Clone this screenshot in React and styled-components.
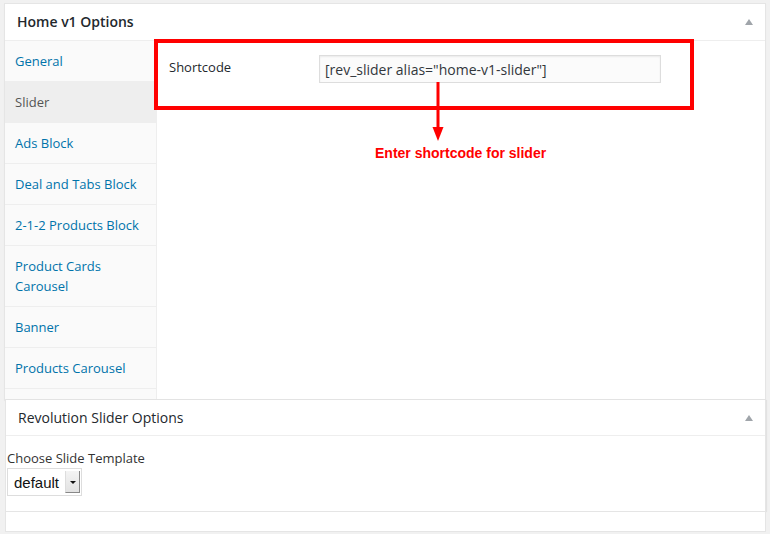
import React from 'react'
import styled, { createGlobalStyle } from 'styled-components'

const tabs = [
  { label: 'General' },
  { label: 'Slider', active: true },
  { label: 'Ads Block' },
  { label: 'Deal and Tabs Block' },
  { label: '2-1-2 Products Block' },
  { label: 'Product Cards Carousel' },
  { label: 'Banner' },
  { label: 'Products Carousel' },
]

const GlobalStyle = createGlobalStyle`
  html, body {
    margin: 0;
    padding: 0;
    background: #f1f1f1;
  }
  body {
    font-family: "Open Sans", "Liberation Sans", sans-serif;
    color: #444;
    min-height: 534px;
  }
`

function App() {
  return (
    <>
      <GlobalStyle />
      <Page>
        <Postbox>
          <PostboxHeader>
            <HeaderTitle $bold>Home v1 Options</HeaderTitle>
            <ToggleArrow />
          </PostboxHeader>
          <TabsLayout>
            <TabList>
              {tabs.map((tab) => (
                <TabItem key={tab.label} $active={tab.active}>
                  {tab.label === 'Product Cards Carousel' ? (
                    <>
                      Product Cards
                      <br />
                      Carousel
                    </>
                  ) : (
                    tab.label
                  )}
                </TabItem>
              ))}
            </TabList>
            <TabPanel>
              <FieldRow>
                <FieldLabel>Shortcode</FieldLabel>
                <TextInput readOnly value={'[rev_slider alias="home-v1-slider"]'} />
              </FieldRow>
              {/* annotation drawn over the screenshot */}
              <Callout />
              <CalloutArrow width="16" height="62" viewBox="0 0 16 62">
                <line x1="8" y1="0" x2="8" y2="47" stroke="#ff0000" strokeWidth="3" />
                <polygon points="2.5,45 13.5,45 8,59" fill="#ff0000" />
              </CalloutArrow>
              <CalloutNote>Enter shortcode for slider</CalloutNote>
            </TabPanel>
          </TabsLayout>
        </Postbox>

        <RevBox>
          <PostboxHeader $compact>
            <HeaderTitle>Revolution Slider Options</HeaderTitle>
            <ToggleArrow />
          </PostboxHeader>
          <RevBody>
            <RevLabel>Choose Slide Template</RevLabel>
            <SelectBox>
              <SelectValue>default</SelectValue>
              <SelectButton />
            </SelectBox>
          </RevBody>
        </RevBox>
        <BottomStrip />
      </Page>
    </>
  )
}

const Page = styled.div`
  padding: 3px 4px 0 4px;
`

const Postbox = styled.section`
  background: #fff;
  border: 1px solid #e5e5e5;
  box-shadow: 0 1px 1px rgba(0, 0, 0, 0.04);
`

const PostboxHeader = styled.header`
  display: flex;
  align-items: center;
  justify-content: space-between;
  height: ${(p) => (p.$compact ? '36px' : '37px')};
  padding: 0 12px;
  border-bottom: 1px solid #eee;
  box-sizing: border-box;
`

const HeaderTitle = styled.h2`
  margin: 0;
  font-size: 14px;
  line-height: 1.4;
  font-weight: ${(p) => (p.$bold ? 600 : 400)};
  color: #23282d;
`

const ToggleArrow = styled.span`
  width: 0;
  height: 0;
  border-left: 4px solid transparent;
  border-right: 4px solid transparent;
  border-bottom: 6px solid #a0a5aa;
`

const TabsLayout = styled.div`
  display: flex;
`

const TabList = styled.ul`
  list-style: none;
  margin: 0;
  padding: 0 0 10px 0;
  width: 151px;
  background: #fafafa;
  border-right: 1px solid #eee;
`

const TabItem = styled.li`
  padding: 10px;
  font-size: 13px;
  line-height: 20px;
  border-bottom: 1px solid #eee;
  color: ${(p) => (p.$active ? '#555' : '#0073aa')};
  background: ${(p) => (p.$active ? '#eee' : 'transparent')};
`

const TabPanel = styled.div`
  position: relative;
  flex: 1;
  padding: 14px 12px;
`

const FieldRow = styled.div`
  display: flex;
  align-items: center;
`

const FieldLabel = styled.label`
  width: 150px;
  font-size: 13px;
  color: #23282d;
  margin-top: -4px;
`

const TextInput = styled.input`
  width: 342px;
  height: 28px;
  box-sizing: border-box;
  padding: 0 5px;
  border: 1px solid #ddd;
  background: #fbfbfb;
  box-shadow: inset 0 1px 2px rgba(0, 0, 0, 0.07);
  font-family: "Open Sans", "Liberation Sans", sans-serif;
  font-size: 14px;
  color: #32373c;
  outline: none;
`

const Callout = styled.div`
  position: absolute;
  left: -3px;
  top: -2px;
  width: 540px;
  height: 71px;
  box-sizing: border-box;
  border: 4px solid #ff0000;
`

const CalloutArrow = styled.svg`
  position: absolute;
  left: 273px;
  top: 41px;
`

const CalloutNote = styled.div`
  position: absolute;
  left: 218px;
  top: 104px;
  font-family: "Liberation Sans", Arial, sans-serif;
  font-weight: 700;
  font-size: 14px;
  line-height: 16px;
  color: #ff0000;
  white-space: nowrap;
`

const RevBox = styled.section`
  margin-left: 1px;
  background: #fff;
  border: 1px solid #e5e5e5;
  border-top: 0;
  box-shadow: 1px 0 1px rgba(0, 0, 0, 0.06);
`

const RevBody = styled.div`
  height: 75px;
  box-sizing: border-box;
  padding: 12px 0 0 1px;
`

const RevLabel = styled.div`
  font-size: 13px;
  line-height: 20px;
  color: #333;
`

const SelectBox = styled.div`
  display: inline-flex;
  align-items: stretch;
  width: 75px;
  height: 28px;
  box-sizing: border-box;
  border: 1px solid #ddd;
  background: #fff;
  padding: 2px 1px 2px 0;
`

const SelectValue = styled.span`
  flex: 1;
  display: flex;
  align-items: center;
  padding-left: 6px;
  font-family: "Liberation Sans", Arial, sans-serif;
  font-size: 15px;
  color: #111;
`

const SelectButton = styled.span`
  position: relative;
  width: 13px;
  background: linear-gradient(#f4f4f4, #e2e2e2);
  border-right: 1px solid #888;
  border-bottom: 1px solid #888;
  border-left: 1px solid #ddd;

  &::after {
    content: '';
    position: absolute;
    left: 4px;
    top: 10px;
    border-left: 3px solid transparent;
    border-right: 3px solid transparent;
    border-top: 3px solid #111;
  }
`

const BottomStrip = styled.div`
  margin-left: 1px;
  height: 19px;
  background: #fff;
  border: 1px solid #e5e5e5;
  border-top: 0;
`

export default App
